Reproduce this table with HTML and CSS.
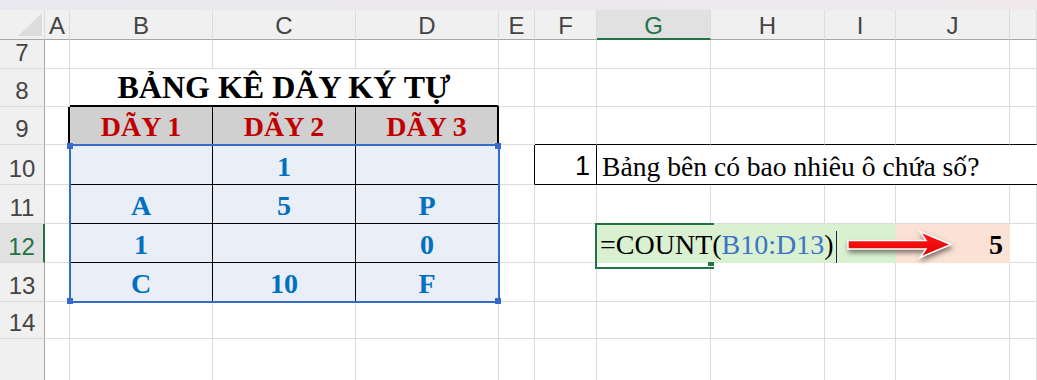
FILE: index.html
```html
<!DOCTYPE html>
<html lang="vi">
<head>
<meta charset="utf-8">
<title>COUNT</title>
<link rel="stylesheet" href="styles.css">
</head>
<body>
<div class="topbar"></div>
<div class="sheet">
  <div class="corner"><span class="tri"></span></div>
  <div class="ch">A</div><div class="ch">B</div><div class="ch">C</div><div class="ch">D</div><div class="ch">E</div><div class="ch">F</div><div class="ch sel">G</div><div class="ch">H</div><div class="ch">I</div><div class="ch">J</div><div class="ch"></div>

  <div class="rh">7</div>
  <div class="c"></div><div class="c"></div><div class="c"></div><div class="c"></div><div class="c"></div><div class="c"></div><div class="c"></div><div class="c"></div><div class="c"></div><div class="c"></div><div class="c"></div>

  <div class="rh">8</div>
  <div class="c"></div><div class="c title">BẢNG KÊ DÃY KÝ TỰ</div>
  <div class="c"></div><div class="c"></div><div class="c"></div><div class="c"></div><div class="c"></div><div class="c"></div><div class="c"></div>

  <div class="rh">9</div>
  <div class="c tl"></div><div class="c th">DÃY 1</div><div class="c th">DÃY 2</div><div class="c th last">DÃY 3</div>
  <div class="c"></div><div class="c bb"></div><div class="c bb"></div><div class="c bb"></div><div class="c bb"></div><div class="c bb"></div><div class="c bb"></div>

  <div class="rh">10</div>
  <div class="c"></div>
  <div class="data">
    <i class="h h1"></i><i class="h h2"></i><i class="h h3"></i><i class="h h4"></i>
    <div class="d"></div><div class="d">1</div><div class="d"></div>
    <div class="d">A</div><div class="d">5</div><div class="d">P</div>
    <div class="d">1</div><div class="d"></div><div class="d">0</div>
    <div class="d">C</div><div class="d">10</div><div class="d">F</div>
  </div>
  <div class="c br"></div><div class="c num">1</div><div class="c q">Bảng bên có bao nhiêu ô chứa số?</div>

  <div class="rh">11</div>
  <div class="c"></div>
  <div class="c"></div><div class="c"></div><div class="c"></div><div class="c"></div><div class="c"></div><div class="c"></div><div class="c"></div>

  <div class="rh sel">12</div>
  <div class="c"></div>
  <div class="c"></div><div class="c"></div>
  <div class="c fx">
    <span class="formula">=COUNT(<span class="ref">B10:D13</span>)<span class="caret"></span></span>
    <svg class="arrow" viewBox="0 0 110 34" width="110" height="34">
      <defs>
        <linearGradient id="ag" x1="0" y1="0" x2="0" y2="1">
          <stop offset="0" stop-color="#ff1a1a"/>
          <stop offset="1" stop-color="#e00000"/>
        </linearGradient>
      </defs>
      <path d="M3,12.5 L81,12.5 L75,3.5 L106,16.5 L75,29.5 L81,21 L3,21 Z" fill="url(#ag)" stroke="#fff" stroke-width="1.5" stroke-linejoin="miter"/>
    </svg>
  </div>
  <div class="c res">5</div>
  <div class="c"></div>

  <div class="rh">13</div>
  <div class="c"></div>
  <div class="c"></div><div class="c"></div><div class="c"></div><div class="c"></div><div class="c"></div><div class="c"></div><div class="c"></div>

  <div class="rh">14</div>
  <div class="c"></div><div class="c"></div><div class="c"></div><div class="c"></div><div class="c"></div><div class="c"></div><div class="c"></div><div class="c"></div><div class="c"></div><div class="c"></div><div class="c"></div>

  <div class="rh end"></div>
  <div class="c nb"></div><div class="c nb"></div><div class="c nb"></div><div class="c nb"></div><div class="c nb"></div><div class="c nb"></div><div class="c nb"></div><div class="c nb"></div><div class="c nb"></div><div class="c nb"></div><div class="c nb"></div>
</div>
</body>
</html>
```

FILE: styles.css
```css
* { box-sizing: border-box; }
html, body { margin: 0; padding: 0; }
body {
  width: 1037px;
  height: 380px;
  overflow: hidden;
  background: #fff;
  font-family: "Liberation Serif", "Times New Roman", serif;
}
.topbar {
  height: 10px;
  background: linear-gradient(90deg, #e8e8ee, #efe9ec);
}
.sheet {
  display: grid;
  grid-template-columns: 45px 25px 143px 143px 143px 36px 62px 114px 114px 71px 114px 27px;
  grid-template-rows: 30px 29px 38px 38px 40px 39px 39px 39px 37px 41px;
}
.corner {
  background: #f0f0f0;
  border-right: 1px solid #dcdcdc;
  border-bottom: 1px solid #a6a6a6;
  display: flex;
  justify-content: flex-end;
  align-items: flex-end;
  padding: 0 2px 3px 0;
}
.tri {
  width: 24px;
  height: 23px;
  background: #dcdcdc;
  clip-path: polygon(100% 0, 100% 100%, 0 100%);
}
.ch, .rh {
  background: #f0f0f0;
  font: 24px/1 "Liberation Sans", Arial, sans-serif;
  color: #444;
  display: flex;
  justify-content: center;
  align-items: flex-end;
}
.ch {
  border-right: 1px solid #dcdcdc;
  border-bottom: 1px solid #a6a6a6;
  padding-bottom: 1px;
}
.ch.sel {
  background: #e1e1e1;
  color: #217346;
  border-bottom: 2px solid #217346;
  padding-bottom: 0;
}
.rh {
  border-right: 1px solid #a6a6a6;
  border-bottom: 1px solid #dcdcdc;
  padding-bottom: 3px;
}
.rh.sel {
  background: #e1e1e1;
  color: #217346;
  border-right: 2px solid #217346;
}
.rh.end { border-bottom: none; }

.c {
  border-right: 1px solid #dcdcdc;
  border-bottom: 1px solid #dcdcdc;
  display: flex;
  align-items: flex-end;
  white-space: nowrap;
  font-size: 28px;
  line-height: 1;
  padding-bottom: 3px;
  min-width: 0;
  color: #000;
}
.c.nb { border-bottom: none; }
.c.bb { border-bottom-color: #000; }
.c.br { border-right-color: #000; }

.title {
  grid-column: span 3;
  justify-content: center;
  font-weight: bold;
  font-size: 32px;
  border-bottom: 2px solid #000;
  padding-bottom: 2px;
}
.tl { border-right: 2px solid #000; }
.th {
  background: #d0d0d0;
  color: #c00000;
  font-weight: bold;
  justify-content: center;
  border-right: 1px solid #000;
  border-bottom: 1px solid #000;
}
.th.last { border-right: 2px solid #000; }

.data {
  grid-column: span 3;
  grid-row: span 4;
  position: relative;
  z-index: 2;
  display: grid;
  grid-template-columns: 143px 143px 143px;
  grid-template-rows: 40px 39px 39px 39px;
  background: #e9eef7;
  outline: 2px solid #356ccb;
  outline-offset: -1px;
}
.d {
  display: flex;
  justify-content: center;
  align-items: flex-end;
  padding-bottom: 3px;
  font-size: 28px;
  line-height: 1;
  font-weight: bold;
  color: #0070c0;
  border-right: 1px solid #000;
  border-bottom: 1px solid #000;
}
.h {
  position: absolute;
  width: 6px;
  height: 6px;
  background: #356ccb;
  z-index: 3;
}
.h1 { left: -3px; top: -2px; }
.h2 { right: -2px; top: -2px; }
.h3 { left: -3px; bottom: -2px; }
.h4 { right: -2px; bottom: -2px; }

.num {
  justify-content: flex-end;
  font: 27px/1 "Liberation Sans", Arial, sans-serif;
  padding: 0 6px 4px 0;
  border-right-color: #000;
  border-bottom-color: #000;
}
.q {
  grid-column: span 5;
  padding-left: 5px;
  font-size: 27.6px;
  border-right: none;
  border-bottom-color: #000;
}

.fx {
  grid-column: span 3;
  background: #d9f1d1;
  border-color: transparent;
  position: relative;
  z-index: 1;
  padding-left: 3px;
}
.fx::before {
  content: "";
  position: absolute;
  left: -2px;
  top: -1px;
  width: 117px;
  height: 42px;
  border: 2px solid #217346;
  border-right: none;
}
.fx::after {
  content: "";
  position: absolute;
  left: 110px;
  top: 38px;
  width: 6px;
  height: 4px;
  background: #217346;
  border-left: 1px solid #fff;
}
.ref { color: #3c73c6; }
.caret {
  display: inline-block;
  width: 1px;
  height: 32px;
  margin: 0 0 -9px 2px;
  background: #2b1d4f;
}
.arrow {
  position: absolute;
  left: 248px;
  top: 4px;
  overflow: visible;
  filter: drop-shadow(1px 3px 2.5px rgba(0, 0, 0, 0.5));
}
.res {
  background: #fbe2d5;
  border-color: transparent;
  justify-content: flex-end;
  padding-right: 6px;
  font-weight: bold;
}
```
